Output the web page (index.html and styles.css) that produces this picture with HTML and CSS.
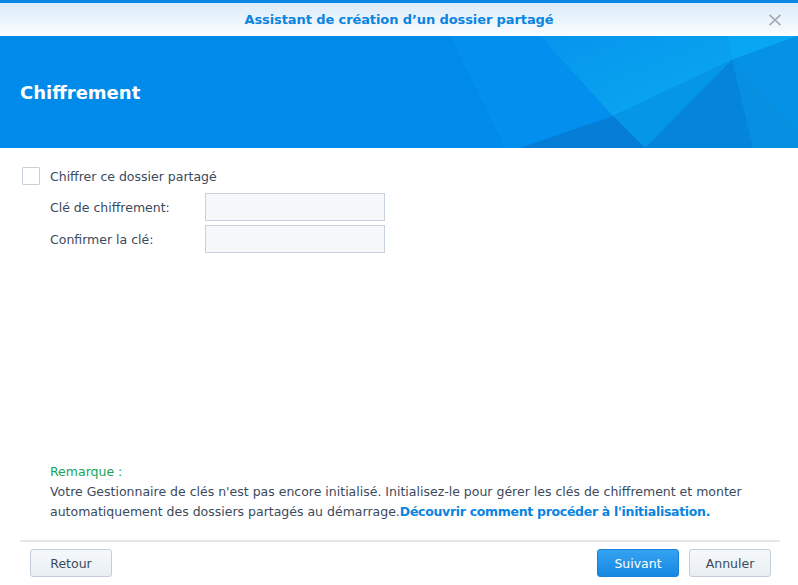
FILE: index.html
```html
<!DOCTYPE html>
<html lang="fr">
<head>
    <meta charset="UTF-8">
    <title>Assistant de création d'un dossier partagé</title>
    <link rel="stylesheet" href="styles.css">
</head>
<body>
    <div class="wizard">
        <!-- Title bar -->
        <div class="titlebar">
            <span class="title">Assistant de création d’un dossier partagé</span>
            <svg class="close" width="14" height="12" viewBox="0 0 14 12">
                <path d="M1.5 0.8 L12.5 11.2 M12.5 0.8 L1.5 11.2" stroke="#a3aab2" stroke-width="1.6" fill="none"/>
            </svg>
        </div>

        <!-- Banner with step name -->
        <div class="banner">
            <svg class="banner-bg" width="798" height="112" viewBox="0 0 798 112" preserveAspectRatio="none">
                <defs>
                    <linearGradient id="glow" x1="0" y1="0" x2="1" y2="1">
                        <stop offset="0" stop-color="#0796ee"/>
                        <stop offset="1" stop-color="#0cb0f0"/>
                    </linearGradient>
                </defs>
                <rect width="798" height="112" fill="#008ae9"/>
                <polygon points="450,0 540,0 613,80 520,112 505,112" fill="#038fed"/>
                <polygon points="540,0 728,0 732,24 613,80" fill="url(#glow)" opacity="0.85"/>
                <polygon points="728,0 798,0 732,24" fill="#09a6f1"/>
                <polygon points="613,80 732,24 645,112" fill="#0696e8"/>
                <polygon points="520,112 613,80 645,112" fill="#057dd6"/>
                <polygon points="645,112 732,24 753,112" fill="#0584dc"/>
                <polygon points="732,24 798,0 798,95" fill="#0592e6"/>
                <polygon points="732,24 798,95 798,112 753,112" fill="#078fe2"/>
            </svg>
            <h1 class="step">Chiffrement</h1>
        </div>

        <div class="content">
            <label class="check-row">
                <span class="checkbox"></span>
                <span>Chiffrer ce dossier partagé</span>
            </label>
            <div class="field">
                <span class="field-label">Clé de chiffrement:</span>
                <span class="input"></span>
            </div>
            <div class="field">
                <span class="field-label">Confirmer la clé:</span>
                <span class="input"></span>
            </div>

            <div class="note">
                <div class="note-title">Remarque :</div>
                <p>Votre Gestionnaire de clés n'est pas encore initialisé. Initialisez-le pour gérer les clés de chiffrement et monter automatiquement des dossiers partagés au démarrage.<a href="#">Découvrir comment procéder à l'initialisation.</a></p>
            </div>
        </div>

        <div class="footer">
            <button class="btn">Retour</button>
            <div class="actions">
                <button class="btn primary">Suivant</button>
                <button class="btn">Annuler</button>
            </div>
        </div>
    </div>
</body>
</html>
```

FILE: styles.css
```css
body {
    margin: 0;
    font-family: "DejaVu Sans", Verdana, sans-serif;
    font-size: 12.5px;
    color: #3b4a5c;
    background: #fff;
}
.wizard {
    height: 585px;
    display: flex;
    flex-direction: column;
    overflow: hidden;
}
.titlebar {
    border-top: 3px solid #0a86e2;
    height: 33px;
    background: linear-gradient(#daebf9, #fbfdff);
    display: flex;
    align-items: center;
    justify-content: center;
    position: relative;
}
.title {
    font-weight: bold;
    font-size: 13px;
    color: #0a84e0;
    letter-spacing: -0.1px;
}
.close {
    position: absolute;
    right: 16px;
    top: 11px;
}
.banner {
    height: 112px;
    position: relative;
    display: flex;
    align-items: center;
}
.banner-bg {
    position: absolute;
    left: 0;
    top: 0;
}
.step {
    position: relative;
    margin: 0 0 0 20px;
    font-size: 18px;
    font-weight: bold;
    color: #fff;
}
.content {
    flex: 1;
    display: flex;
    flex-direction: column;
    padding: 19px 20px 0 22px;
}
.check-row {
    display: flex;
    align-items: center;
    gap: 10px;
    margin-bottom: 8px;
}
.checkbox {
    width: 16px;
    height: 16px;
    border: 1px solid #c6d0da;
    border-radius: 1px;
    background: #fff;
}
.field {
    display: flex;
    align-items: center;
    padding-left: 28px;
    margin-bottom: 4px;
}
.field-label {
    width: 155px;
}
.input {
    width: 178px;
    height: 26px;
    border: 1px solid #c8d3dd;
    background: #f5f7fa;
}
.note {
    margin-top: auto;
    padding-left: 28px;
    margin-bottom: 18px;
    line-height: 20px;
}
.note-title {
    color: #14a55a;
}
.note p {
    margin: 0;
}
.note a {
    color: #0a84e0;
    font-weight: bold;
    text-decoration: none;
    letter-spacing: -0.3px;
}
.footer {
    margin: 0 18px 0 20px;
    border-top: 2px solid #e4e7ea;
    padding: 7px 9px 8px 10px;
    display: flex;
    justify-content: space-between;
}
.actions {
    display: flex;
    gap: 10px;
}
.btn {
    width: 82px;
    height: 28px;
    border: 1px solid #c5ced8;
    border-radius: 3px;
    background: linear-gradient(#f6f9fb, #e8eef3);
    font-family: inherit;
    font-size: 12.5px;
    color: #3b4a5c;
}
.btn.primary {
    border-color: #1a82d8;
    background: linear-gradient(#35a3f2, #1688e2);
    color: #fff;
}
```
